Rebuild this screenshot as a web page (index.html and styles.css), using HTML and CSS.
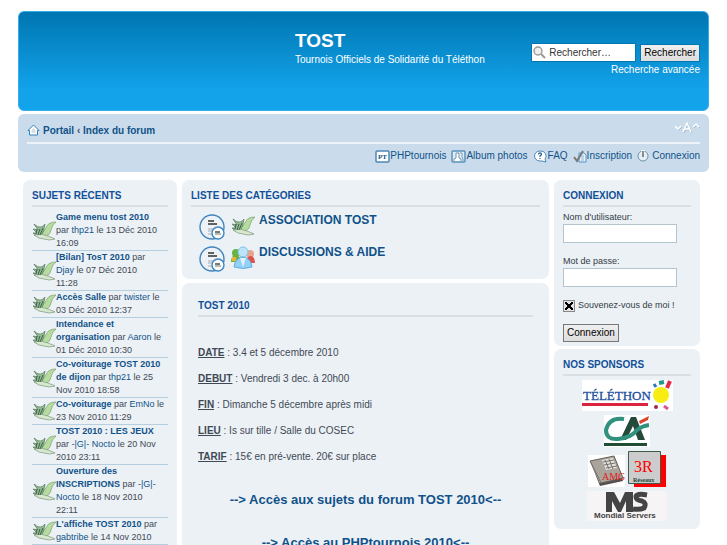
FILE: index.html
```html
<!DOCTYPE html>
<html lang="fr">
<head>
<meta charset="utf-8">
<title>TOST - Portail</title>
<link rel="stylesheet" href="styles.css">
</head>
<body>
<svg class="defs" aria-hidden="true">
  <symbol id="bird" viewBox="0 0 24 24">
    <path d="M8 16Q13 12 15 7Q17 3 24 3Q20 6 19 11Q18 17 11 18Z" fill="#b5dc9c" stroke="#7d9f76" stroke-width=".7"/>
    <path d="M2 5Q6 9 9 8Q12 7 13 5Q12 13 9 17Q3 17 1 14L5 14L1 10L6 11Z" fill="#93bd8c" stroke="#54745c" stroke-width=".7"/>
    <path d="M2 16Q10 14 16 17Q21 19 23 20Q17 22 12 20Q7 20 2 16Z" fill="#d7e8cd" stroke="#7b9580" stroke-width=".7"/>
    <path d="M5 10l-1 5M8 10l-2 6M11 9l-3 7" fill="none" stroke="#3f6250"/>
  </symbol>
  <symbol id="topics" viewBox="0 0 26 26">
    <circle cx="13" cy="13" r="12" fill="#eef2f7" stroke="#4086c0" stroke-width="1.4"/>
    <path d="M9 7h6M9 10h9" stroke="#333" stroke-width="1.3"/>
    <path d="M9 15h6M9 17h4M9 20h4" stroke="#a5abb1"/>
    <circle cx="19" cy="19" r="6" fill="#f8fafc" stroke="#4086c0" stroke-width="1.4"/>
    <path d="M16 18h5" stroke="#333" stroke-width="1.3"/>
    <path d="M16 20h6" stroke="#777"/>
  </symbol>
</svg>
<div class="wrap">
  <header class="header">
    <div class="brand">
      <h1>TOST</h1>
      <p>Tournois Officiels de Solidarité du Téléthon</p>
    </div>
    <form class="search">
      <div class="search-row">
        <label class="search-box">
          <svg width="13" height="13" viewBox="0 0 13 13" fill="none"><circle cx="5" cy="5" r="4" fill="#eee" stroke="#999" stroke-width="1.4"/><path d="m8 8 4 4" stroke="#999" stroke-width="2"/></svg>
          <input type="text" value="Rechercher…" aria-label="Rechercher">
        </label>
        <button class="button" type="button">Rechercher</button>
      </div>
      <a href="#">Recherche avancée</a>
    </form>
  </header>

  <nav class="navbar">
    <div class="crumbs">
      <svg width="13" height="12" viewBox="0 0 13 12"><path d="M6.500 1 12 6.500H10.500V11H2.500V6.500H1Z" fill="#fff" stroke="#2d84bd"/><path d="M4.500 9V6l2-2 2 2v3Z" fill="#ddd"/></svg>
      <span><a href="#">Portail</a> ‹ <a href="#">Index du forum</a></span>
      <a class="font-size" href="#" aria-label="Taille du texte">
        <svg width="27" height="12" viewBox="0 0 27 12" fill="none"><g stroke="#9fb7cb" transform="translate(1 1)"><path d="m2 4 3 3 3-3M20 5l3-3 3 3M10 10l4-9 4 9M11.500 7h5"/></g><g stroke="#fff" stroke-width="1.400"><path d="m2 4 3 3 3-3M20 5l3-3 3 3M10 10l4-9 4 9M11.500 7h5"/></g></svg>
      </a>
    </div>
    <ul class="links">
      <li><a href="#"><svg width="15" height="13" viewBox="0 0 15 13"><rect x="1" y="1" width="13" height="11" rx="1" fill="#fff" stroke="#4d87b5" stroke-width="1.500"/><text x="3" y="9" class="pt">PT</text></svg>PHPtournois</a></li>
      <li><a href="#"><svg width="15" height="13" viewBox="0 0 15 13"><rect x="1" y="1" width="13" height="11" rx="1" fill="#e2ecf5" stroke="#5b91bb" stroke-width="1.500"/><path d="M3 11V9l2-1V3h3v5l2 1v2M9 3h2v4l1 2v2" fill="#fff" stroke="#6c97b9"/></svg>Album photos</a></li>
      <li><a href="#"><svg width="15" height="13" viewBox="0 0 15 13"><path d="M7 1a5.500 5 0 1 0 0 10h2l4 1-1-3A5.500 5 0 0 0 7 1Z" fill="#fff" stroke="#4d87b5"/><path d="M5.500 4.500Q5.500 3 7 3t1.500 1.500Q8.500 5 7 6v1M7 8v1" fill="none" stroke="#2f6c9f" stroke-width="1.300"/></svg>FAQ</a></li>
      <li><a href="#"><svg width="14" height="13" viewBox="0 0 14 13"><path d="M6 3h5l2 2v7H6Z" fill="#e8f3fb" stroke="#4d94cc"/><path d="M8 6h3M8 8h3M8 10h3" stroke="#8bb4d3"/><path d="m1 7 3 4 6-10" fill="none" stroke="#777" stroke-width="2"/></svg>Inscription</a></li>
      <li><a class="login" href="#"><svg width="12" height="12" viewBox="0 0 12 12" fill="none"><circle cx="6" cy="6" r="5" fill="#e5eef5" stroke="#6c91ae"/><path d="M6 0v4" stroke="#fff" stroke-width="3"/><path d="M6 1v6" stroke="#666" stroke-width="1.500"/></svg>Connexion</a></li>
    </ul>
  </nav>

  <main class="columns">
    <section class="panel recent">
      <h2>Sujets récents</h2>
      <ul>
        <li><svg><use href="#bird"/></svg><p><a href="#"><b>Game menu tost 2010</b></a><br>par <a href="#">thp21</a> le 13 Déc 2010<br>16:09</p></li>
        <li><svg><use href="#bird"/></svg><p><a href="#"><b>[Bilan] TosT 2010</b></a> par<br><a href="#">Djay</a> le 07 Déc 2010<br>11:28</p></li>
        <li><svg><use href="#bird"/></svg><p><a href="#"><b>Accès Salle</b></a> par <a href="#">twister</a> le<br>03 Déc 2010 12:37</p></li>
        <li><svg><use href="#bird"/></svg><p><a href="#"><b>Intendance et<br>organisation</b></a> par <a href="#">Aaron</a> le<br>01 Déc 2010 10:30</p></li>
        <li><svg><use href="#bird"/></svg><p><a href="#"><b>Co-voiturage TOST 2010<br>de dijon</b></a> par <a href="#">thp21</a> le 25<br>Nov 2010 18:58</p></li>
        <li><svg><use href="#bird"/></svg><p><a href="#"><b>Co-voiturage</b></a> par <a href="#">EmNo</a> le<br>23 Nov 2010 11:29</p></li>
        <li><svg><use href="#bird"/></svg><p><a href="#"><b>TOST 2010 : LES JEUX</b></a><br>par <a href="#">-|G|- Nocto</a> le 20 Nov<br>2010 23:11</p></li>
        <li><svg><use href="#bird"/></svg><p><a href="#"><b>Ouverture des<br>INSCRIPTIONS</b></a> par <a href="#">-|G|-<br>Nocto</a> le 18 Nov 2010<br>22:11</p></li>
        <li><svg><use href="#bird"/></svg><p><a href="#"><b>L'affiche TOST 2010</b></a> par<br><a href="#">gabtribe</a> le 14 Nov 2010</p></li>
      </ul>
    </section>

    <div class="column center">
      <section class="panel">
        <h2>Liste des catégories</h2>
        <ul class="categories">
          <li><svg class="state"><use href="#topics"/></svg><svg class="pic"><use href="#bird"/></svg><a href="#">ASSOCIATION TOST</a></li>
          <li><svg class="state"><use href="#topics"/></svg><svg class="pic" viewBox="0 0 24 24"><circle cx="5" cy="7" r="4" fill="#65b544"/><path d="M0 16q0-7 5-7 5 1 5 7Z" fill="#6fae3c"/><path d="M1 11h4v4H1z" fill="#e3b83e"/><circle cx="19" cy="8" r="4" fill="#e7a58c"/><path d="M15 17q0-7 5-7 4 1 4 7Z" fill="#dd5149"/><circle cx="12" cy="6" r="5" fill="#bfe4fa" stroke="#7fc2ec"/><path d="M3 21q1-9 9-10 8 1 9 10-9 3-18 0Z" fill="#93d0f5" stroke="#64afe2"/><path d="m9 12 3 9 3-9" fill="#dff3ff"/></svg><a href="#">DISCUSSIONS &amp; AIDE</a></li>
        </ul>
      </section>
      <section class="panel event">
        <h2>TOST 2010</h2>
        <div class="facts">
          <p><u><b>DATE</b></u> : 3.4 et 5 décembre 2010</p>
          <p><u><b>DEBUT</b></u> : Vendredi 3 dec. à 20h00</p>
          <p><u><b>FIN</b></u> : Dimanche 5 décembre après midi</p>
          <p><u><b>LIEU</b></u> : Is sur tille / Salle du COSEC</p>
          <p><u><b>TARIF</b></u> : 15€ en pré-vente. 20€ sur place</p>
        </div>
        <a class="access" href="#">--&gt; Accès aux sujets du forum TOST 2010&lt;--</a>
        <a class="access" href="#">--&gt; Accès au PHPtournois 2010&lt;--</a>
      </section>
    </div>

    <div class="column side">
      <section class="panel">
        <h2>Connexion</h2>
        <form class="login-form">
          <label for="user">Nom d'utilisateur:</label>
          <input class="field" id="user" type="text">
          <label for="pass">Mot de passe:</label>
          <input class="field" id="pass" type="password">
          <div class="remember"><input id="keep" type="checkbox" checked><label for="keep">Souvenez-vous de moi !</label></div>
          <button class="button" type="button">Connexion</button>
        </form>
      </section>
      <section class="panel">
        <h2>Nos sponsors</h2>
        <div class="sponsors">
          <svg width="91" height="31" viewBox="0 0 91 31"><path fill="#fff" d="M0 0h91v31H0z"/><text x="1" y="20" class="telethon">TÉLÉTHON</text><path d="M0 23h66v3H0z" fill="#dc2441"/><circle cx="79" cy="15" r="8" fill="#f8ed12"/><path d="m72 4 2 3" stroke="#2c78b8" stroke-width="3"/><path d="m77 3 5-1" stroke="#25988b" stroke-width="4"/><path d="m88 1-3 7" stroke="#e22b47" stroke-width="4"/><circle cx="74" cy="27" r="2" fill="#a1294a"/><path d="m82 26 4 3" stroke="#d85a91" stroke-width="3"/></svg>
          <svg width="46" height="32" viewBox="0 0 46 32"><path fill="#fff" d="M0 0h46v32H0z"/><path d="m16 25 11-23h5l9 23h-7l-5-14-7 14Z" fill="#25493a"/><path d="M20 4Q5 2 2 15q0 10 12 9 13-1 19-9 5-4 12-5" fill="none" stroke="#31917f" stroke-width="4"/><path d="m35 6 10-5-1 4-8 4Z" fill="#dc432d"/><path d="M0 28h43v3H0z" fill="#214c36"/></svg>
          <div class="pair">
            <svg width="37" height="32" viewBox="0 0 37 32"><path fill="#fff" d="M0 0h37v32H0z"/><path d="m2 6 10 25 23-5-1-3-22 5Z" fill="#554f4d"/><path d="M2 6 26 1l9 22-22 5Z" fill="#aaa49c" stroke="#665f59"/><path d="m14 5 11-2 4 10-11 2Z" fill="#e4e2df"/><path d="m15 7 11-2m-10 5 11-2m-9 5 11-2M17 5l4 9m0-10 4 10" stroke="#77706a"/><text x="14" y="25" class="amg">AMG</text></svg>
            <svg width="38" height="36" viewBox="0 0 38 36"><path fill="red" d="M6 4h32v32H6z"/><path d="M.5.5h32v32H.500z" fill="#ccc" stroke="#3c5d4a"/><text x="6" y="21" class="three">3R</text><text x="5" y="31" class="reseaux">Réseaux</text></svg>
          </div>
          <svg width="80" height="30" viewBox="0 0 80 30"><path fill="#f7f4f5" d="M0 0h80v30H0z"/><path d="M19 21V1h8l6 11 5-11h8v20h-7V10l-5 11h-3l-6-11v11Z" fill="#444"/><path d="M60 4q-11-2-11 2 0 3 6 4 5 2 2 7-4 2-11 1" fill="none" stroke="#444" stroke-width="5"/><text x="7" y="27" class="mondial">Mondial Servers</text></svg>
        </div>
      </section>
    </div>
  </main>
</div>
</body>
</html>
```

FILE: styles.css
```css
* { box-sizing: border-box; }
body { margin: 0; background: #fff; color: #3f4955; font: 10px/13px "Liberation Sans", Arial, sans-serif; }
h1, h2, p, ul { margin: 0; padding: 0; }
ul { list-style: none; }
a { color: #105289; text-decoration: none; }
svg { display: block; flex: none; }
.defs { position: absolute; width: 0; height: 0; }
.wrap { margin: 11px 18px 0; }

.header {
  display: flex; justify-content: space-between; height: 100px; padding: 18px 8px 0 276px;
  border: 1px solid #35aeea; border-radius: 6px; color: #fff;
  background: linear-gradient(#0076b1, #12a3eb 80%, #12a3eb);
}
.brand h1 { font-size: 19px; line-height: 22px; }
.brand p { line-height: 15px; white-space: nowrap; }
.search { display: flex; flex-direction: column; align-items: flex-end; padding-top: 13px; }
.search-row { display: flex; align-items: center; gap: 4px; }
.search-box { display: flex; align-items: center; gap: 3px; width: 105px; height: 19px; padding: 0 1px; background: #fff; border: 1px solid #0075b0; }
.search-box input { width: 100%; min-width: 0; padding: 0; border: 0; color: #333; font: 10px "Liberation Sans", Arial, sans-serif; }
.search a { color: #fff; line-height: 15px; }
.button { height: 18px; padding: 0 3px; border: 1px solid #777; background: linear-gradient(#efefef, #ddd); color: #000; font: 10px/14px "Liberation Sans", Arial, sans-serif; white-space: nowrap; }
.search .button { border-color: #0075b0; }

.navbar { margin-top: 3px; height: 58px; padding: 2px 9px; border-radius: 6px; background: #cadceb; }
.crumbs { display: flex; align-items: center; gap: 3px; height: 28px; padding-top: 2px; border-bottom: 2px solid #edf3f8; font-weight: bold; }
.font-size { align-self: flex-start; margin-left: auto; padding-top: 4px; }
.links { display: flex; justify-content: flex-end; gap: 5px; padding-top: 5px; }
.links a { display: flex; align-items: center; line-height: 14px; }
.links .login { gap: 3px; }
.pt { font: bold 7px "Liberation Serif", serif; fill: #105289; }

.columns { display: flex; align-items: flex-start; gap: 5px; padding: 8px 9px 0 5px; }
.column { display: flex; flex-direction: column; gap: 4px; }
.center { flex: 1; min-width: 0; }
.side { width: 146px; gap: 3px; }
.panel { padding: 8px 9px; border-radius: 7px; background: #ecf1f6; }
.panel h2 { height: 19px; border-bottom: 2px solid #dcdfe2; color: #115098; font-size: 10px; line-height: 15px; text-transform: uppercase; white-space: nowrap; }

.recent { width: 154px; font-size: 9px; }
.recent ul { padding-top: 4px; }
.recent li { display: flex; align-items: center; border-bottom: 1px solid #b6cfe0; white-space: nowrap; }
.recent li svg { width: 24px; height: 24px; }

.categories { padding: 7px 8px 0; }
.categories li { display: flex; gap: 6px; height: 32px; }
.categories li:last-child { height: 25px; }
.categories a { margin-left: -2px; font-size: 12px; font-weight: bold; line-height: 12px; }
.state { width: 26px; height: 26px; }
.pic { width: 24px; height: 24px; }

.event { padding: 15px 16px; }
.facts { display: flex; flex-direction: column; gap: 13px; padding: 29px 0 24px; }
.access { display: block; padding: 5px 0 22px; text-align: center; font-size: 13px; font-weight: bold; line-height: 16px; }

.login-form { display: flex; flex-direction: column; align-items: flex-start; padding-top: 4px; color: #333c45; font-size: 9px; }
.side .panel:first-child { padding-bottom: 4px; }
.field { width: 114px; height: 19px; margin-bottom: 12px; padding: 0 2px; border: 1px solid #b4c5cd; background: #fff; }
.remember { display: flex; align-items: center; gap: 3px; margin-bottom: 12px; }
.remember input {
  appearance: none; flex: none; width: 12px; height: 12px; margin: 0; border: 1px solid #888;
  background: linear-gradient(45deg, transparent 38%, #000 38% 62%, transparent 62%) center / 8px 8px no-repeat, linear-gradient(-45deg, transparent 38%, #000 38% 62%, transparent 62%) center / 8px 8px no-repeat, #e5e5e5;
}

.sponsors { display: flex; flex-direction: column; align-items: center; gap: 4px; padding-top: 4px; }
.pair { display: flex; align-items: flex-end; gap: 3px; }
.telethon { font: 13px "Liberation Serif", serif; fill: #244f9e; stroke: #244f9e; stroke-width: 0.3px; }
.amg { font: 10px "Liberation Serif", serif; fill: #e02020; }
.three { font: 16px "Liberation Serif", serif; fill: #f00; }
.reseaux { font: bold 6px "Liberation Serif", serif; fill: #24483a; }
.mondial { font: bold 8px "Liberation Sans", Arial, sans-serif; fill: #444; }
```
